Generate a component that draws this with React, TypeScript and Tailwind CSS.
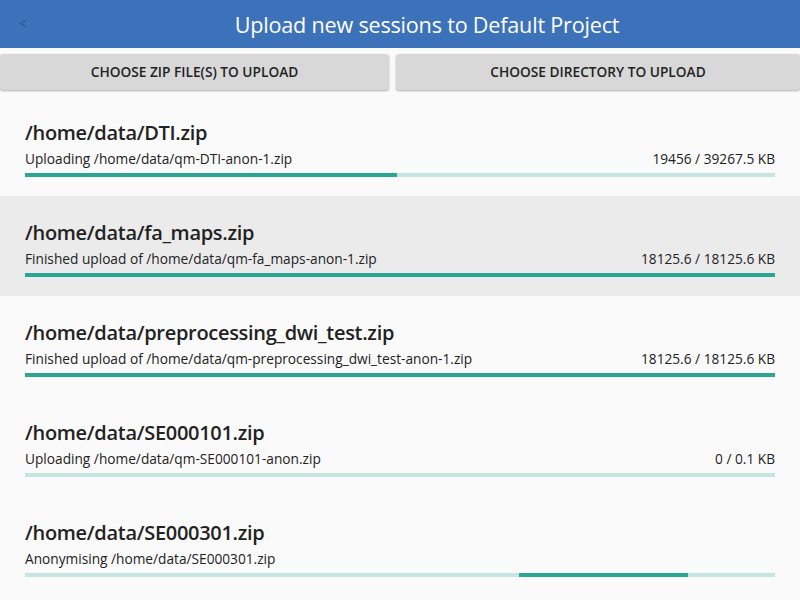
import React from "react";

type Item = {
  title: string;
  status: string;
  size?: string;
  progress?: number;
  indeterminate?: boolean;
  highlight?: boolean;
};

const items: Item[] = [
  { title: "/home/data/DTI.zip", status: "Uploading /home/data/qm-DTI-anon-1.zip", size: "19456 / 39267.5 KB", progress: 19456 / 39267.5 },
  { title: "/home/data/fa_maps.zip", status: "Finished upload of /home/data/qm-fa_maps-anon-1.zip", size: "18125.6 / 18125.6 KB", progress: 1, highlight: true },
  { title: "/home/data/preprocessing_dwi_test.zip", status: "Finished upload of /home/data/qm-preprocessing_dwi_test-anon-1.zip", size: "18125.6 / 18125.6 KB", progress: 1 },
  { title: "/home/data/SE000101.zip", status: "Uploading /home/data/qm-SE000101-anon.zip", size: "0 / 0.1 KB", progress: 0 },
  { title: "/home/data/SE000301.zip", status: "Anonymising /home/data/SE000301.zip", indeterminate: true },
];

export default function App() {
  return (
    <div
      className="w-[800px] h-[600px] overflow-hidden bg-[#fafafa] text-[#222]"
      style={{ fontFamily: '"Open Sans", "Noto Sans", sans-serif' }}
    >
      <div className="h-[48px] bg-[#3c72b9] flex items-center">
        <div className="w-[54px] h-full flex items-center pl-[19px] text-[#27508a] text-[13px]">&lt;</div>
        <div className="flex-1 text-center text-white text-[21.6px] tracking-[-0.2px] pt-[2px]">
          Upload new sessions to Default Project
        </div>
      </div>
      <div className="flex gap-[7px] mt-[6px]">
        <button className="w-[389px] h-[36px] bg-[#d7d8d7] rounded-[3px] shadow-[0_1px_2px_rgba(0,0,0,0.3)] text-[13.7px] font-semibold text-[#222] uppercase">
          Choose zip file(s) to upload
        </button>
        <button className="flex-1 h-[36px] bg-[#d7d8d7] rounded-[3px] shadow-[0_1px_2px_rgba(0,0,0,0.3)] text-[13.7px] font-semibold text-[#222] uppercase">
          Choose directory to upload
        </button>
      </div>
      <div className="mt-[6px]">
        {items.map((it) => (
          <div key={it.title} className={`h-[100px] px-[25px] pt-[23px] ${it.highlight ? "bg-[#ebebeb]" : ""}`}>
            <div className="text-[20px] font-semibold leading-[28px] h-[28px] tracking-[-0.3px]">{it.title}</div>
            <div className="flex justify-between text-[13.7px] leading-[18px] mt-[3px]">
              <span>{it.status}</span>
              <span>{it.size ?? ""}</span>
            </div>
            <div className="mt-[5px] h-[4px] bg-[#c5e5e0] relative">
              {it.indeterminate ? (
                <div className="absolute top-0 bottom-0 left-[494px] w-[169px] bg-[#2ca694]" />
              ) : (
                <div className="h-full bg-[#2ca694]" style={{ width: `${(it.progress ?? 0) * 100}%` }} />
              )}
            </div>
          </div>
        ))}
      </div>
    </div>
  );
}
